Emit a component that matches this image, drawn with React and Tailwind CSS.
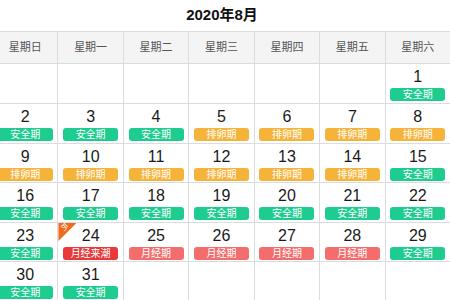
import React from "react";

const G = "bg-[#1fcc8f]";
const O = "bg-[#f6b33a]";
const R = "bg-[#f46d6d]";
const RR = "bg-[#e8393b]";

const weeks = [
  [null, null, null, null, null, null, [1, "安全期", G]],
  [[2, "安全期", G], [3, "安全期", G], [4, "安全期", G], [5, "排卵期", O], [6, "排卵期", O], [7, "排卵期", O], [8, "排卵期", O]],
  [[9, "排卵期", O], [10, "排卵期", O], [11, "排卵期", O], [12, "排卵期", O], [13, "排卵期", O], [14, "排卵期", O], [15, "安全期", G]],
  [[16, "安全期", G], [17, "安全期", G], [18, "安全期", G], [19, "安全期", G], [20, "安全期", G], [21, "安全期", G], [22, "安全期", G]],
  [[23, "安全期", G], [24, "月经来潮", RR, true], [25, "月经期", R], [26, "月经期", R], [27, "月经期", R], [28, "月经期", R], [29, "安全期", G]],
  [[30, "安全期", G], [31, "安全期", G], null, null, null, null, null],
];
const heights = ["h-[40px]", "h-[40px]", "h-[39px]", "h-[40px]", "h-[39px]", "h-[39px]"];
const heads = ["星期日", "星期一", "星期二", "星期三", "星期四", "星期五", "星期六"];

export default function App() {
  return (
    <div className="w-[450px] h-[300px] overflow-hidden bg-white" style={{ fontFamily: '"Liberation Sans", "Noto Sans CJK SC", sans-serif' }}>
      <div className="h-[31px] flex items-center justify-center text-[15px] font-bold text-[#111]">
        <span className="ml-[-6px]">2020年8月</span>
      </div>
      <div className="w-[458px] ml-[-7px] border-t border-[#dcdcdc]">
        <div className="grid grid-cols-7 h-[32px] bg-[#f4f4f4] border-b border-[#dcdcdc]">
          {heads.map((h, i) => (
            <div key={i} className="flex items-center justify-center text-[11px] text-[#555] border-r border-[#dcdcdc]">{h}</div>
          ))}
        </div>
        {weeks.map((w, wi) => (
          <div key={wi} className={`grid grid-cols-7 ${heights[wi]} border-b border-[#dcdcdc]`}>
            {w.map((c, ci) => (
              <div key={ci} className="relative border-r border-[#dcdcdc] flex flex-col items-center">
                {c && (
                  <>
                    {c[3] && (
                      <div className="absolute left-0 top-0 w-[18px] h-[18px] bg-[#ee6b1e] [clip-path:polygon(0_0,100%_0,0_100%)]">
                        <span className="absolute left-[2px] top-[0px] text-[8px] leading-[10px] text-white">今</span>
                      </div>
                    )}
                    <div className="mt-[3px] h-[20px] leading-[20px] text-[16px] text-[#1a1a1a]">{c[0]}</div>
                    <div className={`mt-[1px] w-[55px] h-[13px] rounded-[3px] ${c[2]} flex items-center justify-center text-[10px] leading-none text-white`}>{c[1]}</div>
                  </>
                )}
              </div>
            ))}
          </div>
        ))}
      </div>
    </div>
  );
}
